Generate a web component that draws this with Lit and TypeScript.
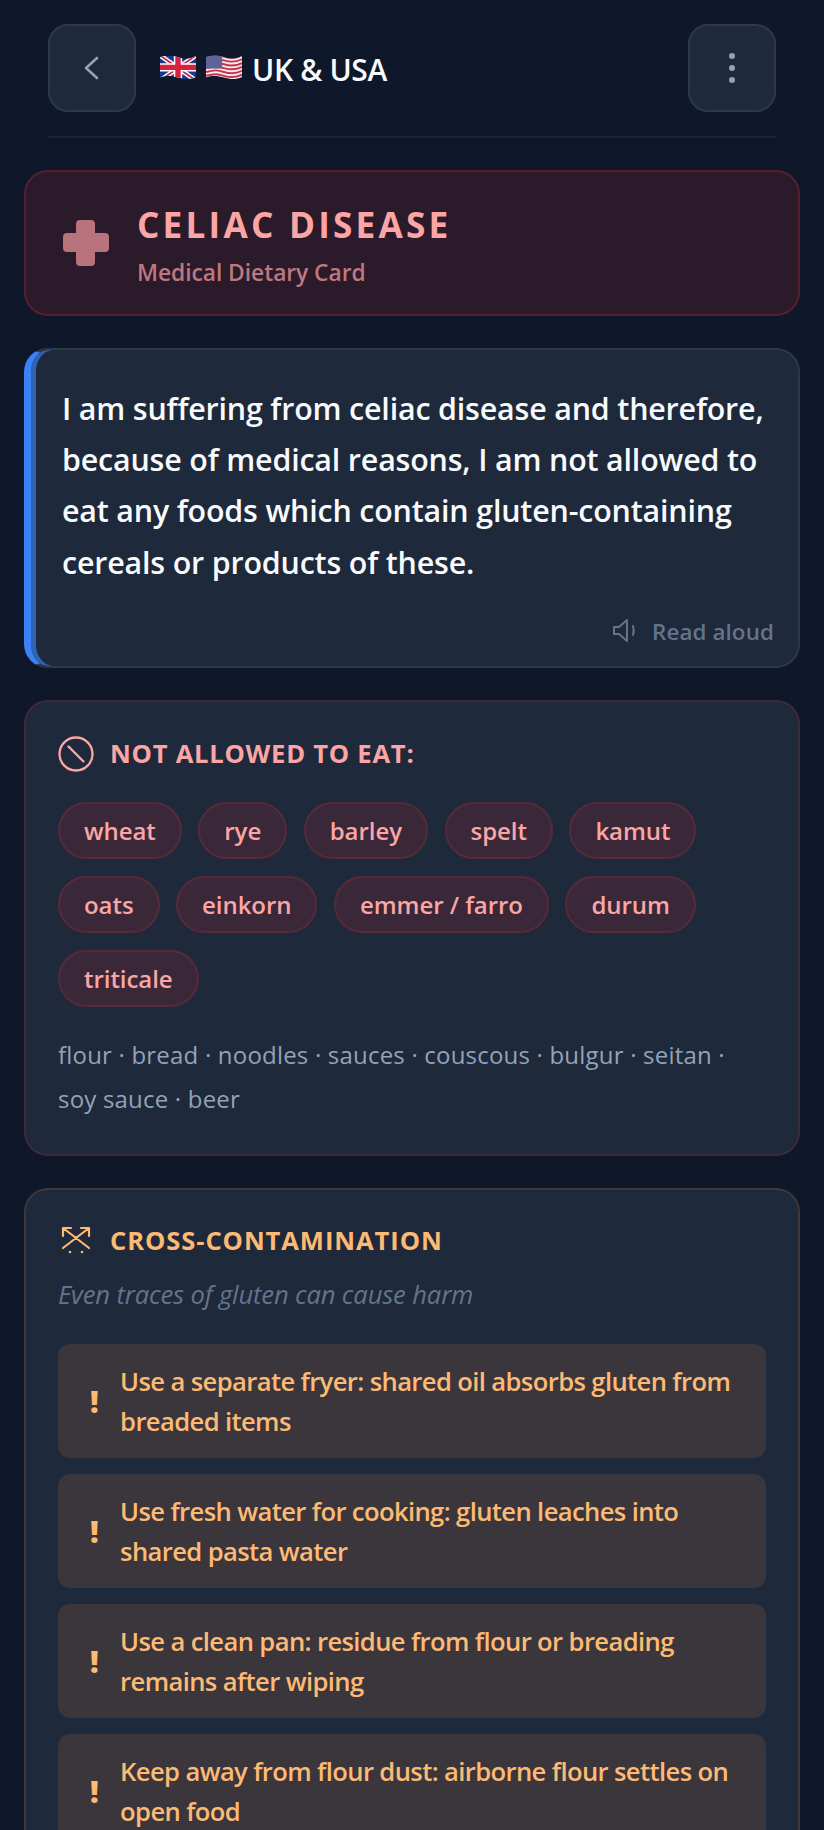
import { LitElement, html, css, svg } from "lit";
import { customElement } from "lit/decorators.js";

const chips = ["wheat","rye","barley","spelt","kamut","oats","einkorn","emmer / farro","durum","triticale"];
const warnings = [
  "Use a separate fryer: shared oil absorbs gluten from breaded items",
  "Use fresh water for cooking: gluten leaches into shared pasta water",
  "Use a clean pan: residue from flour or breading remains after wiping",
  "Keep away from flour dust: airborne flour settles on open food",
];

const wave = "M0 3C10 -1 20 -1 30 3S50 6 60 1V36C50 41 40 40 30 37S10 33 0 37Z";

const ukFlag = svg`<svg class="flag" viewBox="0 0 60 42" aria-hidden="true">
  <clipPath id="wu"><path d=${wave}/></clipPath>
  <g clip-path="url(#wu)">
    <rect width="60" height="42" fill="#14398c"/>
    <path d="M0 0L60 42M60 0L0 42" stroke="#fff" stroke-width="8"/>
    <path d="M0 0L60 42M60 0L0 42" stroke="#d3263f" stroke-width="3"/>
    <path d="M30 0V42M0 20H60" stroke="#fff" stroke-width="14"/>
    <path d="M30 0V42M0 20H60" stroke="#d8213f" stroke-width="9"/>
  </g>
</svg>`;

const usStripes = Array.from({ length: 7 }, (_, i) => -1 + i * 6.4);
const usFlag = svg`<svg class="flag" viewBox="0 0 60 42" aria-hidden="true">
  <clipPath id="wa"><path d=${wave}/></clipPath>
  <g clip-path="url(#wa)">
    <rect width="60" height="42" fill="#f6eeee"/>
    ${usStripes.map((y) => svg`<path d="M0 ${y + 3}C15 ${y - 1} 20 ${y} 30 ${y + 3}S50 ${y + 6} 60 ${y + 1}" fill="none" stroke="#c8324a" stroke-width="3.200"/>`)}
    <rect width="27" height="22" fill="#5f6498"/>
  </g>
</svg>`;

@customElement("app-root")
export class AppRoot extends LitElement {
  static styles = css`
    :host {
      display: block;
      height: 1830px;
      overflow: hidden;
      background: #0f172a;
      font-family: "Open Sans", "Noto Sans", sans-serif;
      color: #f8fafc;
    }
    .page { padding: 24px; display: flex; flex-direction: column; gap: 32px; }
    .header {
      display: flex; align-items: center; gap: 24px;
      margin: 0 24px; padding-bottom: 24px; border-bottom: 2px solid #192338;
    }
    .icon-btn {
      width: 88px; height: 88px; box-sizing: border-box; flex: none;
      display: flex; align-items: center; justify-content: center;
      background: #1e293b; border: 2px solid #2d3848; border-radius: 20px;
      color: #94a3b8;
    }
    .header-title { flex: 1; display: flex; align-items: center; font-size: 30px; font-weight: 600; letter-spacing: -0.35px; }
    .title-text { margin-top: 3px; }
    .flag { width: 36px; height: 26px; flex: none; }
    .flags { display: flex; gap: 10px; margin-right: 10px; }
    .alert {
      display: flex; align-items: center; gap: 27px; height: 146px; box-sizing: border-box;
      padding: 0 36px; background: #2a1a2a; border: 2px solid #561f2e; border-radius: 24px;
    }
    .alert-text { padding-top: 4px; }
    .alert-title { font-size: 35.2px; font-weight: 700; color: #fca5a5; letter-spacing: 3.2px; line-height: 44px; }
    .alert-sub { font-size: 22.8px; font-weight: 600; color: #bd7880; letter-spacing: -0.05px; line-height: 30px; margin-top: 12px; }
    .cross { width: 48px; height: 48px; flex: none; }
    .statement {
      background: #1e293b; border: 2px solid #2d3848; border-left: 7px solid #3b82f6;
      box-shadow: inset 5px 0 0 #2f62b0;
      border-radius: 24px; padding: 33px 24px 19px 31px; height: 320px; box-sizing: border-box;
    }
    .statement p { margin: 0; font-size: 30.4px; font-weight: 600; line-height: 51.2px; letter-spacing: -0.17px; }
    .read { display: flex; justify-content: flex-end; align-items: center; gap: 15px; margin-top: 28px; color: #64748b; font-size: 22.4px; font-weight: 600; letter-spacing: 0.1px; }
    .card { background: #1e293b; border-radius: 24px; padding: 34px 32px 32px; }
    .card.red { border: 2px solid #3f2a3b; }
    .card.orange { border: 2px solid #413638; padding-top: 33px; }
    .sec { display: flex; align-items: center; gap: 16px; font-size: 25.6px; font-weight: 700; letter-spacing: 0.75px; line-height: 36px; }
    .red .sec { color: #fca5a5; }
    .orange .sec { color: #fdba74; letter-spacing: 0.9px; }
    .chips { display: flex; flex-wrap: wrap; gap: 17px 16.5px; margin-top: 29.5px; }
    .chip {
      padding: 0 24px; height: 57px; box-sizing: border-box; display: flex; align-items: center;
      border-radius: 999px; background: #3a2838; border: 2px solid #562a38; color: #fca5a5;
      font-size: 24px; font-weight: 600; letter-spacing: -0.05px;
    }
    .foods { margin: 26px 0 0; color: #94a3b8; font-size: 24px; line-height: 44.8px; letter-spacing: 0.2px; }
    .hint { margin: 18px 0 0; color: #64748b; font-style: italic; font-size: 25.6px; letter-spacing: -0.15px; }
    .warns { display: flex; flex-direction: column; gap: 16px; margin-top: 32px; }
    .warn {
      display: flex; align-items: center; gap: 22px; padding: 18px 24px 16px 32px;
      background: #3a363c; border-radius: 12px; color: #fdba74;
      font-size: 25.6px; font-weight: 600; line-height: 40px; letter-spacing: -0.62px;
    }
    .bang { flex: none; font-weight: 800; font-size: 30px; }
  `;

  render() {
    return html`<div class="page">
      <header class="header">
        <div class="icon-btn">
          <svg width="32" height="32" viewBox="0 0 32 32" fill="none" stroke="currentColor" stroke-width="2.600" stroke-linecap="round" stroke-linejoin="round"><path d="M21 6L10 16L21 26"/></svg>
        </div>
        <div class="header-title"><span class="flags">${ukFlag}${usFlag}</span><span class="title-text">UK &amp; USA</span></div>
        <div class="icon-btn">
          <svg width="8" height="32" viewBox="0 0 8 32" fill="currentColor"><circle cx="4" cy="4" r="3"/><circle cx="4" cy="16" r="3"/><circle cx="4" cy="28" r="3"/></svg>
        </div>
      </header>

      <section class="alert">
        <svg class="cross" viewBox="0 0 48 48" fill="#b9737c"><path d="M14 5a4 4 0 0 1 4-4h11a4 4 0 0 1 4 4v9h10a4 4 0 0 1 4 4v11a4 4 0 0 1-4 4H33v10a4 4 0 0 1-4 4H18a4 4 0 0 1-4-4V33H5a4 4 0 0 1-4-4V18a4 4 0 0 1 4-4h9z"/></svg>
        <div class="alert-text">
          <div class="alert-title">CELIAC DISEASE</div>
          <div class="alert-sub">Medical Dietary Card</div>
        </div>
      </section>

      <section class="statement">
        <p>I am suffering from celiac disease and therefore, because of medical reasons, I am not allowed to eat any foods which contain gluten-containing cereals or products of these.</p>
        <div class="read">
          <svg width="24" height="24" viewBox="0 0 24 24" fill="none" stroke="currentColor" stroke-width="2" stroke-linejoin="round" stroke-linecap="round"><path d="M1 8H6L14 1V22L6 15H1z"/><path d="M20 7c1 3 1 6 0 9"/></svg>
          Read aloud
        </div>
      </section>

      <section class="card red">
        <div class="sec">
          <svg width="36" height="36" viewBox="0 0 36 36" fill="none" stroke="currentColor" stroke-width="2.400" stroke-linecap="round"><circle cx="18" cy="18" r="16.500"/><path d="M10.500 10.500L25.500 25.500"/></svg>
          NOT ALLOWED TO EAT:
        </div>
        <div class="chips">${chips.map((c) => html`<span class="chip">${c}</span>`)}</div>
        <p class="foods">flour · bread · noodles · sauces · couscous · bulgur · seitan · soy sauce · beer</p>
      </section>

      <section class="card orange">
        <div class="sec">
          <svg width="36" height="36" viewBox="0 0 36 36" fill="none" stroke="currentColor" stroke-width="2.200" stroke-linecap="round" stroke-linejoin="round"><path d="M5 5L31 25M31 5L5 25M5 13V5H13M23 5H31V13"/><circle cx="18" cy="15" r="1.800" fill="currentColor" stroke="none"/><circle cx="12" cy="29" r="1.300" fill="currentColor" stroke="none"/><circle cx="24" cy="29" r="1.300" fill="currentColor" stroke="none"/></svg>
          CROSS-CONTAMINATION
        </div>
        <p class="hint">Even traces of gluten can cause harm</p>
        <div class="warns">${warnings.map((w) => html`<div class="warn"><span class="bang">!</span><span>${w}</span></div>`)}</div>
      </section>
    </div>`;
  }
}
